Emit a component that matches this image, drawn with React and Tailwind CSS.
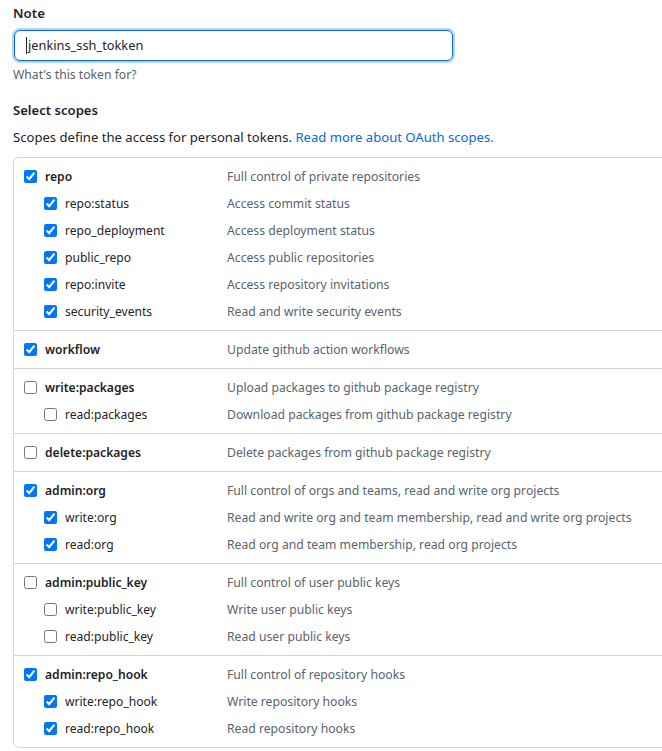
import { useState } from 'react';

const groups = [
  {
    name: 'repo',
    desc: 'Full control of private repositories',
    checked: true,
    children: [
      ['repo:status', 'Access commit status'],
      ['repo_deployment', 'Access deployment status'],
      ['public_repo', 'Access public repositories'],
      ['repo:invite', 'Access repository invitations'],
      ['security_events', 'Read and write security events'],
    ],
  },
  { name: 'workflow', desc: 'Update github action workflows', checked: true, children: [] },
  {
    name: 'write:packages',
    desc: 'Upload packages to github package registry',
    checked: false,
    children: [['read:packages', 'Download packages from github package registry']],
  },
  { name: 'delete:packages', desc: 'Delete packages from github package registry', checked: false, children: [] },
  {
    name: 'admin:org',
    desc: 'Full control of orgs and teams, read and write org projects',
    checked: true,
    children: [
      ['write:org', 'Read and write org and team membership, read and write org projects'],
      ['read:org', 'Read org and team membership, read org projects'],
    ],
  },
  {
    name: 'admin:public_key',
    desc: 'Full control of user public keys',
    checked: false,
    children: [
      ['write:public_key', 'Write user public keys'],
      ['read:public_key', 'Read user public keys'],
    ],
  },
  {
    name: 'admin:repo_hook',
    desc: 'Full control of repository hooks',
    checked: true,
    children: [
      ['write:repo_hook', 'Write repository hooks'],
      ['read:repo_hook', 'Read repository hooks'],
    ],
  },
];

function ScopeRow({ label, desc, checked, top }) {
  const [on, setOn] = useState(checked);
  return (
    <div className="grid grid-cols-[203px_1fr] h-[27px] items-center">
      <label className={`flex items-center gap-[8px] ${top ? 'pl-0' : 'pl-[20px]'}`}>
        <input
          type="checkbox"
          checked={on}
          onChange={() => setOn((prev) => !prev)}
          className="m-0 w-[13px] h-[13px] shrink-0"
        />
        <span className={`text-[12.1px] leading-[18px] pt-[1px] text-[#1f2328] ${top ? 'font-semibold' : 'font-normal'}`}>
          {label}
        </span>
      </label>
      <span className="text-[12.2px] leading-[18px] pt-[1px] text-[#59636e] whitespace-nowrap">{desc}</span>
    </div>
  );
}

export default function App() {
  return (
    <div
      className="w-[662px] h-[751px] overflow-hidden bg-white pl-[13px]"
      style={{ fontFamily: '"Noto Sans", sans-serif' }}
    >
      <div className="mt-[3px] h-[20px] leading-[20px] text-[13.3px] font-semibold text-[#1f2328]">Note</div>

      <div className="mt-[7px] ml-[1px] w-[439px] h-[31px] rounded-[6px] border border-[#0969da] shadow-[0_0_0_2px_#b6d4f5] flex items-center pl-[11px] text-[12.8px] text-[#1f2328]">
        <span className="border-l border-[#1f2328] h-[17px] leading-[17px] pl-[1px]">jenkins_ssh_tokken</span>
      </div>

      <div className="mt-[5px] h-[18px] leading-[18px] text-[12.2px] text-[#59636e]">What's this token for?</div>

      <div className="mt-[16px] h-[20px] leading-[20px] text-[13.1px] font-semibold text-[#1f2328]">Select scopes</div>

      <p className="mt-[7px] h-[20px] leading-[20px] text-[13.1px] text-[#1f2328] whitespace-nowrap">
        Scopes define the access for personal tokens.{' '}
        <a href="#" className="text-[#0969da]">Read more about OAuth scopes.</a>
      </p>

      <div className="mt-[10px] w-[700px] rounded-[6px] border border-[#d1d9e0]">
        {groups.map((g, i) => (
          <div key={g.name} className={`pl-[10px] py-[5px] ${i > 0 ? 'border-t border-[#d1d9e0]' : ''}`}>
            <ScopeRow label={g.name} desc={g.desc} checked={g.checked} top />
            {g.children.map(([label, desc]) => (
              <ScopeRow key={label} label={label} desc={desc} checked={g.checked} />
            ))}
          </div>
        ))}
      </div>
    </div>
  );
}
